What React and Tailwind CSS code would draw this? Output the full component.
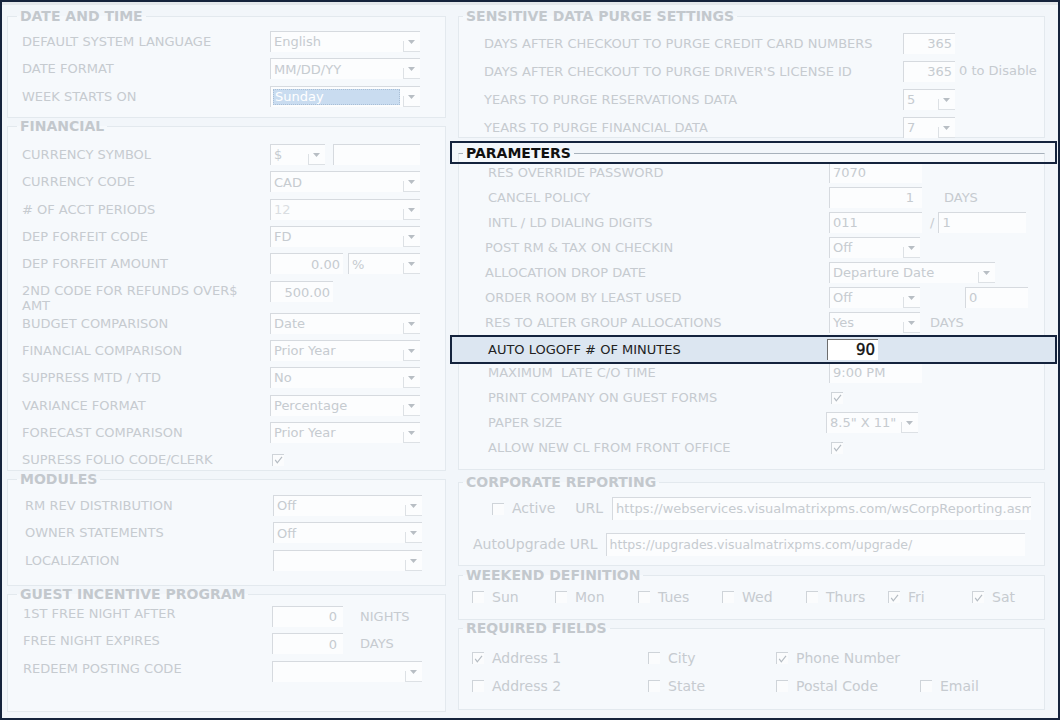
import React from "react";

const LC = "text-[#c6cbd0]";

function Arrow() {
  return (
    <div className="relative w-[17px] shrink-0 self-stretch flex items-center justify-center">
      <span className="absolute left-0 bottom-0 h-[11px] w-px bg-[#dde1e5]" />
      <span className="absolute left-0 right-0 bottom-0 h-px bg-[#dde1e5]" />
      <svg width="7" height="4" viewBox="0 0 7 4">
        <path d="M0 0h7L3.5 4z" fill="#b8bec4" />
      </svg>
    </div>
  );
}

function Select({ value = "", className = "", dim = false, hl = false }) {
  return (
    <div className={`flex h-[21px] bg-[#fcfdfe] border-t border-l border-[#d6dadf] ${className}`}>
      {hl ? (
        <div className="flex-1 my-[2px] ml-[2px] mr-[3px] flex items-center pl-[1px] bg-[#c9dcf0] border border-dotted border-[#a9bfd6] text-[13px] text-white">
          {value}
        </div>
      ) : (
        <div
          className={`flex-1 flex items-center pl-[3px] text-[13px] whitespace-nowrap overflow-hidden ${
            dim ? "text-[#dadee2]" : "text-[#c6cbd0]"
          }`}
        >
          {value}
        </div>
      )}
      <Arrow />
    </div>
  );
}

function Input({ value = "", className = "", right = false, text = "text-[13px]" }) {
  return (
    <div
      className={`flex items-center h-[21px] bg-[#fcfdfe] border-t border-l border-[#d6dadf] px-[3px] ${text} text-[#c6cbd0] whitespace-nowrap overflow-hidden ${
        right ? "justify-end" : ""
      } ${className}`}
    >
      {value}
    </div>
  );
}

function Check({ on = false }) {
  return (
    <span className="w-[12px] h-[12px] shrink-0 border-t border-l border-[#cfd4d9] bg-[#fbfcfd] flex items-center justify-center">
      {on && (
        <svg width="9" height="8" viewBox="0 0 9 8">
          <path d="M1.2 3.8L3.3 6.8L8 0.8" stroke="#b5bcc3" strokeWidth="1.2" fill="none" />
        </svg>
      )}
    </span>
  );
}

function Row({ label, lw, h = "h-[27.3px]", children, lc = "" }) {
  return (
    <div className={`flex items-center ${h}`}>
      <div className={`${lw} shrink-0 text-[13px] leading-[15px] ${LC} whitespace-pre ${lc}`}>{label}</div>
      <div className="flex items-center">{children}</div>
    </div>
  );
}

function FS({ title, className = "", ml = "ml-[9px]", dark = false, children }) {
  return (
    <fieldset className={`border border-[#e3e9ee] bg-[#f6f9fc] ${className}`}>
      <legend
        className={`${ml} px-[3px] text-[14px] leading-[16px] font-bold ${
          dark ? "text-[#111111]" : "text-[#c3c8cd]"
        }`}
      >
        {title}
      </legend>
      {children}
    </fieldset>
  );
}

function CheckItem({ on, label, className = "" }) {
  return (
    <div className={`flex items-center gap-[8px] text-[14px] ${LC} ${className}`}>
      <Check on={on} />
      <span>{label}</span>
    </div>
  );
}

export default function App() {
  const L1 = "w-[248px]";
  const L4 = "w-[249px]";
  const R1 = "w-[419px]";
  const P = "w-[341px]";
  return (
    <div className="w-[1060px] h-[720px] overflow-hidden border-2 border-[#15233c] bg-[#f2f6fa] shadow-[inset_0_3px_0_#e4e8ec] flex pt-[6px] pl-[5px] gap-[12px] font-['DejaVu_Sans',sans-serif]">
      {/* LEFT COLUMN */}
      <div className="w-[439px] flex flex-col shrink-0">
        <FS title="DATE AND TIME" className="h-[110px]">
          <div className="pl-[14px] pt-[4px] flex flex-col">
            <Row label="DEFAULT SYSTEM LANGUAGE" lw={L1}>
              <Select value="English" className="w-[150px]" />
            </Row>
            <Row label="DATE FORMAT" lw={L1}>
              <Select value="MM/DD/YY" className="w-[150px]" />
            </Row>
            <Row label="WEEK STARTS ON" lw={L1}>
              <Select value="Sunday" hl className="w-[150px]" />
            </Row>
          </div>
        </FS>

        <FS title="FINANCIAL" className="h-[353px]">
          <div className="pl-[14px] pt-[7px] flex flex-col">
            <Row label="CURRENCY SYMBOL" lw={L1}>
              <Select value="$" className="w-[55px]" />
              <Input className="w-[87px] ml-[8px]" />
            </Row>
            <Row label="CURRENCY CODE" lw={L1}>
              <Select value="CAD" className="w-[150px]" />
            </Row>
            <Row label="# OF ACCT PERIODS" lw={L1}>
              <Select value="12" dim className="w-[150px]" />
            </Row>
            <Row label="DEP FORFEIT CODE" lw={L1}>
              <Select value="FD" className="w-[150px]" />
            </Row>
            <Row label="DEP FORFEIT AMOUNT" lw={L1}>
              <Input value="0.00" right className="w-[73px]" />
              <Select value="%" className="w-[72px] ml-[5px]" />
            </Row>
            <div className="flex items-start h-[32px] pt-[4px]">
              <div className={`${L1} shrink-0 text-[13px] leading-[15px] ${LC} mt-[2px]`}>
                2ND CODE FOR REFUNDS OVER$
                <br />
                AMT
              </div>
              <Input value="500.00" right className="w-[63px]" />
            </div>
            <Row label="BUDGET COMPARISON" lw={L1}>
              <Select value="Date" className="w-[150px]" />
            </Row>
            <Row label="FINANCIAL COMPARISON" lw={L1}>
              <Select value="Prior Year" className="w-[150px]" />
            </Row>
            <Row label="SUPPRESS MTD / YTD" lw={L1}>
              <Select value="No" className="w-[150px]" />
            </Row>
            <Row label="VARIANCE FORMAT" lw={L1}>
              <Select value="Percentage" className="w-[150px]" />
            </Row>
            <Row label="FORECAST COMPARISON" lw={L1}>
              <Select value="Prior Year" className="w-[150px]" />
            </Row>
            <Row label="SUPRESS FOLIO CODE/CLERK" lw={L1}>
              <span className="ml-[2px]">
                <Check on />
              </span>
            </Row>
          </div>
        </FS>

        <FS title="MODULES" className="h-[115px]">
          <div className="pl-[17px] pt-[5px] flex flex-col">
            <Row label="RM REV DISTRIBUTION" lw={L1}>
              <Select value="Off" className="w-[149px]" />
            </Row>
            <Row label="OWNER STATEMENTS" lw={L1}>
              <Select value="Off" className="w-[149px]" />
            </Row>
            <Row label="LOCALIZATION" lw={L1}>
              <Select value="" className="w-[149px]" />
            </Row>
          </div>
        </FS>

        <FS title="GUEST INCENTIVE PROGRAM" className="h-[126px]">
          <div className="pl-[15px] pt-[1px] flex flex-col">
            <Row label="1ST FREE NIGHT AFTER" lw={L4} lc="mb-[6px]">
              <Input value="0" right className="w-[71px] pr-[6px]" />
              <span className={`ml-[17px] text-[13px] ${LC}`}>NIGHTS</span>
            </Row>
            <Row label="FREE NIGHT EXPIRES" lw={L4} lc="mb-[6px]">
              <Input value="0" right className="w-[71px] pr-[6px]" />
              <span className={`ml-[17px] text-[13px] ${LC}`}>DAYS</span>
            </Row>
            <Row label="REDEEM POSTING CODE" lw={L4} lc="mb-[6px]">
              <Select value="" className="w-[150px]" />
            </Row>
          </div>
        </FS>
      </div>

      {/* RIGHT COLUMN */}
      <div className="w-[587px] flex flex-col shrink-0">
        <FS title="SENSITIVE DATA PURGE SETTINGS" ml="ml-[4px]" className="h-[130px]">
          <div className="pl-[25px] pt-[5px] flex flex-col">
            <Row label="DAYS AFTER CHECKOUT TO PURGE CREDIT CARD NUMBERS" lw={R1} h="h-[28px]">
              <Input value="365" right className="w-[52px]" />
            </Row>
            <Row label="DAYS AFTER CHECKOUT TO PURGE DRIVER'S LICENSE ID" lw={R1} h="h-[28px]">
              <Input value="365" right className="w-[52px]" />
              <span className={`ml-[4px] text-[13px] ${LC}`}>0 to Disable</span>
            </Row>
            <Row label="YEARS TO PURGE RESERVATIONS DATA" lw={R1} h="h-[28px]">
              <Select value="5" className="w-[52px]" />
            </Row>
            <Row label="YEARS TO PURGE FINANCIAL DATA" lw={R1} h="h-[28px]">
              <Select value="7" className="w-[52px]" />
            </Row>
          </div>
        </FS>

        <div className="relative mt-[7px]">
          <FS title="PARAMETERS" dark ml="ml-[4px]" className="h-[325px] border-t-[#a7b1bb]">
            <div className="pl-[29px] -mt-[1px] flex flex-col">
              <Row label="RES OVERRIDE PASSWORD" lw={P} h="h-[25px]">
                <Input value="7070" className="w-[93px] border-t-[#c4c8cc]" />
              </Row>
              <Row label="CANCEL POLICY" lw={P} h="h-[25px]">
                <Input value="1" right className="w-[93px] pr-[8px]" />
                <span className={`ml-[22px] text-[13px] ${LC}`}>DAYS</span>
              </Row>
              <Row label="INTL / LD DIALING DIGITS" lw={P} h="h-[25px]">
                <Input value="011" className="w-[93px]" />
                <span className={`ml-[8px] text-[13px] ${LC}`}>/</span>
                <Input value="1" className="w-[88px] ml-[4px]" />
              </Row>
              <Row label="POST RM & TAX ON CHECKIN" lw={P} h="h-[25px]" lc="-ml-[3px] mr-[3px]">
                <Select value="Off" className="w-[91px]" />
              </Row>
              <Row label="ALLOCATION DROP DATE" lw={P} h="h-[25px]" lc="-ml-[3px] mr-[3px]">
                <Select value="Departure Date" className="w-[166px]" />
              </Row>
              <Row label="ORDER ROOM BY LEAST USED" lw={P} h="h-[25px]" lc="-ml-[3px] mr-[3px]">
                <Select value="Off" className="w-[91px]" />
                <Input value="0" className="w-[63px] ml-[45px]" />
              </Row>
              <Row label="RES TO ALTER GROUP ALLOCATIONS" lw={P} h="h-[25px]" lc="-ml-[3px] mr-[3px]">
                <Select value="Yes" className="w-[91px]" />
                <span className={`ml-[10px] text-[13px] ${LC}`}>DAYS</span>
              </Row>
              <div className="relative z-10 flex items-center h-[29px] -mb-[4px] -ml-[38px] -mr-[13px] border-2 border-[#14233d] bg-[#dce6f1] pl-[36px]">
                <div className="w-[339px] shrink-0 text-[13px] leading-[15px] text-[#222222]">AUTO LOGOFF # OF MINUTES</div>
                <div className="flex items-center justify-end w-[51px] h-[21px] bg-white border-t border-l border-[#6d6d6d] pr-[3px] text-[15px] text-[#111111] [-webkit-text-stroke:0.4px_#111111]">
                  90
                </div>
              </div>
              <Row label="MAXIMUM  LATE C/O TIME" lw={P} h="h-[25px]">
                <Input value="9:00 PM" className="w-[93px]" />
              </Row>
              <Row label="PRINT COMPANY ON GUEST FORMS" lw={P} h="h-[25px]">
                <span className="ml-[2px]">
                  <Check on />
                </span>
              </Row>
              <Row label="PAPER SIZE" lw={P} h="h-[25px]">
                <Select value={'8.5" X 11"'} className="w-[92px] -ml-[3px]" />
              </Row>
              <Row label="ALLOW NEW CL FROM FRONT OFFICE" lw={P} h="h-[25px]">
                <span className="ml-[2px]">
                  <Check on />
                </span>
              </Row>
            </div>
          </FS>
          <div className="absolute -left-[8px] -top-[4px] w-[607px] h-[23px] border-2 border-[#14233d] pointer-events-none" />
        </div>

        <FS title="CORPORATE REPORTING" ml="ml-[4px]" className="h-[92px] mt-[4px]">
          <div className="flex flex-col pt-[7px] gap-[13px]">
            <div className="flex items-center h-[23px] pl-[33px]">
              <Check />
              <span className={`ml-[8px] text-[14px] ${LC}`}>Active</span>
              <span className={`ml-[20px] text-[14px] ${LC}`}>URL</span>
              <Input
                value="https://webservices.visualmatrixpms.com/wsCorpReporting.asmx"
                text="text-[13px]"
                className="w-[419px] h-[23px] ml-[9px] text-[#b9bfc5]"
              />
            </div>
            <div className="flex items-center h-[23px] pl-[14px]">
              <span className={`text-[14px] ${LC}`}>AutoUpgrade URL</span>
              <Input
                value="https://upgrades.visualmatrixpms.com/upgrade/"
                text="text-[12.5px]"
                className="w-[419px] h-[23px] ml-[8px] text-[#b9bfc5]"
              />
            </div>
          </div>
        </FS>

        <FS title="WEEKEND DEFINITION" ml="ml-[4px]" className="h-[53px] mt-[1px]">
          <div className="flex items-center h-[26px] pt-[2px] pl-[13px]">
            <CheckItem label="Sun" className="w-[83px]" />
            <CheckItem label="Mon" className="w-[83px]" />
            <CheckItem label="Tues" className="w-[84px]" />
            <CheckItem label="Wed" className="w-[84px]" />
            <CheckItem label="Thurs" className="w-[82px]" />
            <CheckItem on label="Fri" className="w-[84px]" />
            <CheckItem on label="Sat" />
          </div>
        </FS>

        <FS title="REQUIRED FIELDS" ml="ml-[4px]" className="h-[90px]">
          <div className="flex flex-col pt-[8px] pl-[13px]">
            <div className="flex items-center h-[28px]">
              <CheckItem on label="Address 1" className="w-[176px]" />
              <CheckItem label="City" className="w-[128px]" />
              <CheckItem on label="Phone Number" />
            </div>
            <div className="flex items-center h-[28px]">
              <CheckItem label="Address 2" className="w-[176px]" />
              <CheckItem label="State" className="w-[128px]" />
              <CheckItem label="Postal Code" className="w-[144px]" />
              <CheckItem label="Email" />
            </div>
          </div>
        </FS>
      </div>
    </div>
  );
}
